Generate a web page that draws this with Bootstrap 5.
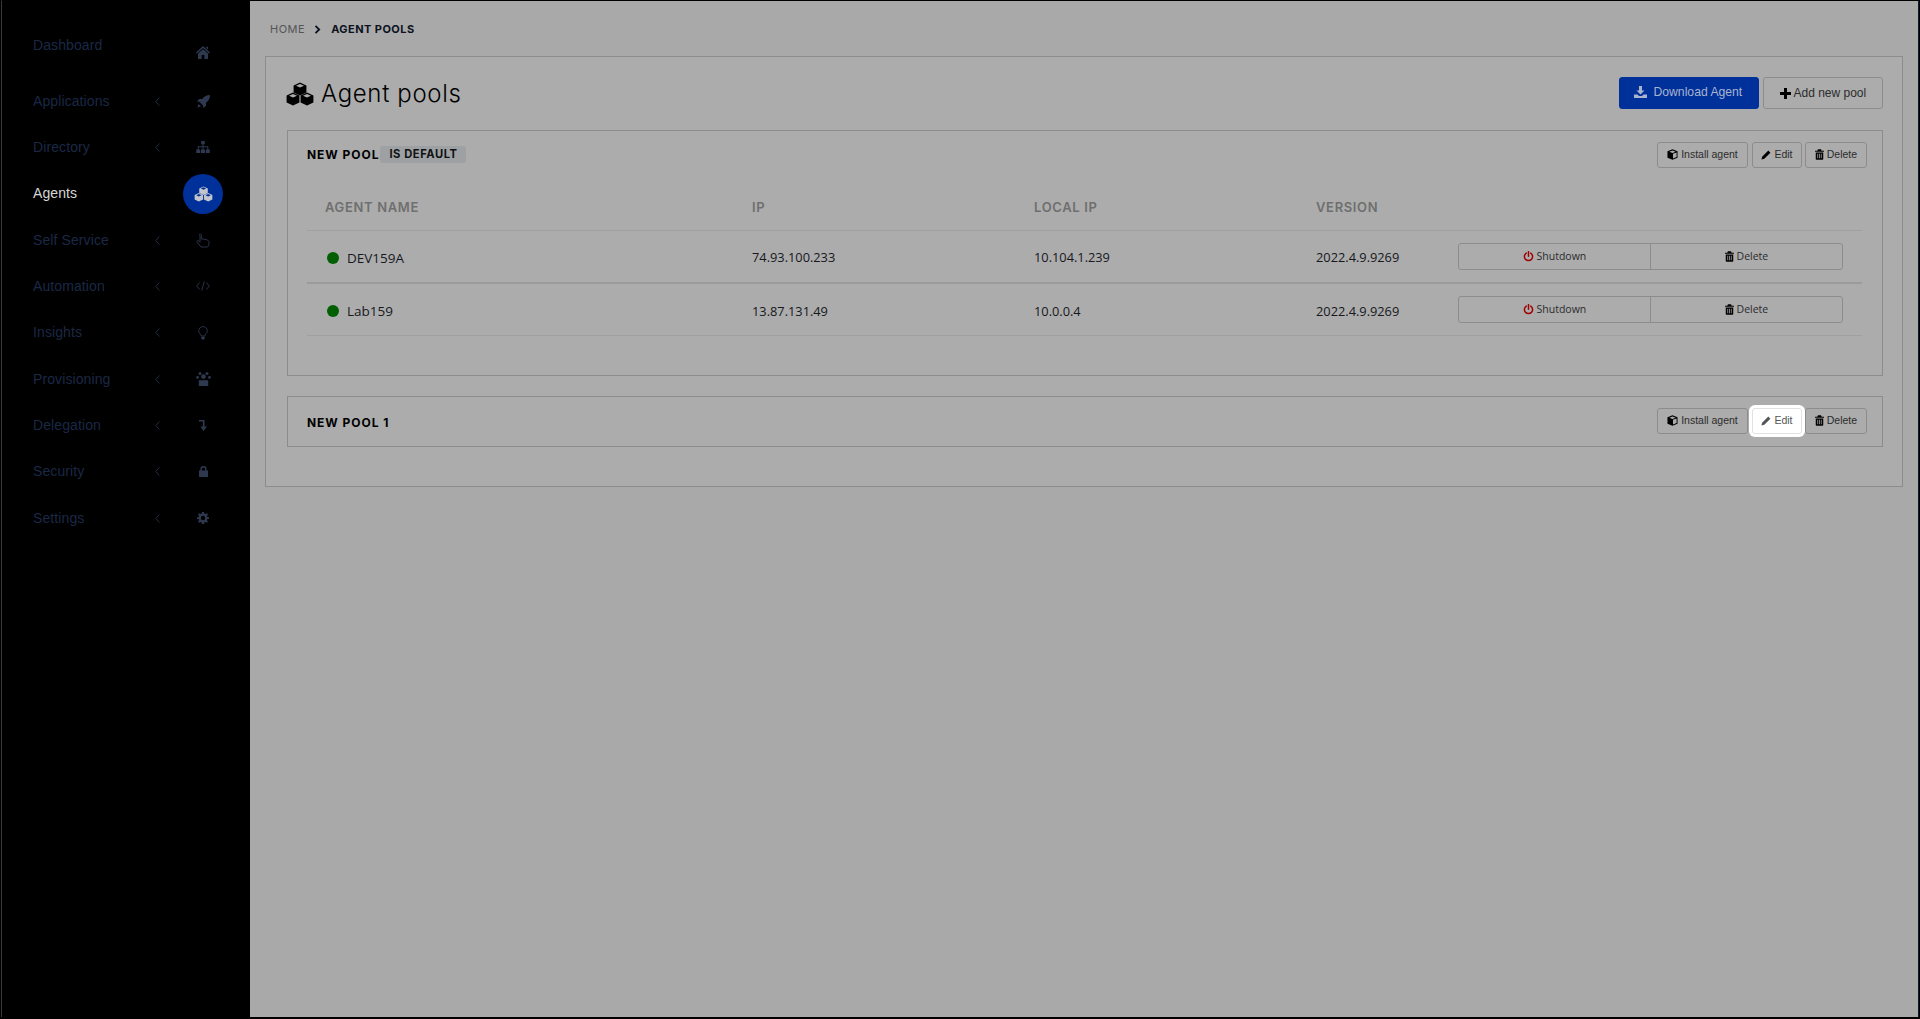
<!DOCTYPE html>
<html lang="en">
<head>
<meta charset="utf-8">
<title>Agent pools</title>
<link href="https://cdn.jsdelivr.net/npm/bootstrap@5.3.0/dist/css/bootstrap.min.css" rel="stylesheet">
<style>
html,body{height:100%;background:#000;overflow:hidden}
.frame{height:1017px;border:1px solid #3a3a3a;border-top-color:#000;border-right-color:#111a33;border-bottom:0;margin:0 1px 0 1px;background:#a9a9a9;font-family:"Liberation Sans",Arial,sans-serif}
.sidenav{width:248px;background:#000;padding-top:32px;flex:none}
.side-row{height:46.33px;padding-left:31px;color:#1b2845;font-size:14px;letter-spacing:.1px}
.side-row.first{height:45px;align-items:flex-start!important;padding-top:2px}
.side-row.active{color:#d6d6d6}
.side-label{width:121px}
.side-chev{width:29px;color:#27324a;padding-left:1px}
.side-chev svg{display:block}
.side-ico{width:40px;height:40px;color:#2e3950}
.first .side-ico{margin-top:-3px}
.first .side-chev{height:1px}
.active .side-ico{background:#00309a;color:#c2c6cc}
.main-col{padding:0 15px 0 15px;min-width:0}
.crumbs{height:55px;padding:2px 0 0 5px;font-family:Inter,sans-serif;font-size:11px;color:#555;letter-spacing:.5px}
.crumbs b{color:#0c1220;font-weight:700;letter-spacing:.45px}
.crumbs svg{margin:0 10px 0 9px}
.pane{background:#acacac;border:1px solid #8c8c8c;border-radius:0;padding:0 19px 39px 21px}
.pane-head{height:73px;padding-bottom:1px}
.pane-title{font-family:Inter,sans-serif;font-weight:300;font-size:24px;line-height:1;letter-spacing:.65px;color:#000;margin:1px 0 0 -1px}
.pane-title svg{margin-right:7px}
.btn-blue,.btn-blue:hover{background:#00309a;border:1px solid #00309a;color:#a9b4cf;font-size:12.2px;width:140px;height:32px;padding:0 2px 1px 0;border-radius:3px}
.btn-plain,.btn-plain:hover{background:transparent;border:1px solid #8c8c8c;color:#2b2b2b;font-size:12px;width:120px;height:32px;padding:0 0 1px;border-radius:3px;margin-left:4px}
.pool{background:transparent;border:1px solid #8c8c8c;border-radius:0;margin-bottom:20px}
.pool-head{padding:11px 15px 0 19px;height:51px}
.pool-last{height:49px;padding-top:11px}
.pool-name{font-family:Inter,sans-serif;font-weight:700;font-size:12px;letter-spacing:.95px;line-height:17px;color:#000;margin-top:4px}
.pool-last .pool-name{margin-top:6px}
.pill{background:#9ea1a4;color:#111;font-family:Inter,sans-serif;font-weight:700;font-size:11.2px;letter-spacing:.55px;padding:0 8px 0 9px;height:17px;line-height:17px;border-radius:3px;margin-left:1px;margin-top:4px}
.btn-tiny,.btn-tiny:hover{background:transparent;border:1px solid #8c8c8c;color:#2b2b2b;font-size:10.5px;height:26px;padding:0;border-radius:3px;white-space:nowrap}
.w-install{width:91px;margin-right:4px}
.w-edit{width:50px;margin-right:3px}
.w-del{width:62px}
.hilite,.hilite:hover{background:#fff;border-color:#e2e2e2;color:#555;box-shadow:0 0 0 3px #fff;position:relative}
.pool-table{table-layout:fixed;width:1555px;margin:0 0 39px 19px;--bs-table-bg:transparent;color:#16181d;font-family:"Open Sans",sans-serif;font-size:12.8px}
.pool-table th{font-family:Inter,sans-serif;font-weight:600;font-size:13px;letter-spacing:.65px;color:#6f6f6f;height:48px;vertical-align:middle;padding:4px 18px 0;border-bottom:1px solid #a0a0a0}
.pool-table td{height:52px;vertical-align:middle;padding:3px 18px 0;border-bottom:1px solid #a0a0a0;background:transparent;color:#16181d}
.pool-table td.acts{padding-top:1px}
.pool-table tr.thick td{border-bottom:2px solid #9b9b9b;height:53px}
.pool-table tbody tr:last-child td{padding-top:4px}
.pool-table tbody tr:last-child td.acts{padding-top:1px}
.c1{width:427px}.c2,.c3{width:282px}.c4{width:142px}.c5{width:422px}
.agent{gap:8px;font-size:13.5px;padding-left:2px}
.dot{width:12px;height:12px;border-radius:50%;background:#005f00;flex:none}
.pwr{color:#a00000}
.row-btn,.row-btn:hover{background:transparent;border:1px solid #8c8c8c;color:#2b2b2b;font-size:10.5px;height:27px;width:193px;padding:0;border-radius:0}
.row-btn:first-child{border-radius:3px 0 0 3px}
.row-btn:last-child{border-radius:0 3px 3px 0;margin-left:-1px}
svg.i{vertical-align:-2px;fill:currentColor}
</style>
</head>
<body>
<svg width="0" height="0" class="d-none" aria-hidden="true">
<symbol id="cube" viewBox="0 0 14 14"><path d="M7 .6 13.400 3.600V10.400L7 13.400.6 10.400V3.600Z" fill="currentColor"/><path d="M7 2 11 3.800 7 5.600 3 3.800Z" fill="var(--cube-top,#acacac)"/></symbol>
<symbol id="cubes" viewBox="0 0 28 24"><use href="#cube" x="7" y="0" width="14" height="14"/><use href="#cube" x="0" y="10" width="14" height="14"/><use href="#cube" x="14" y="10" width="14" height="14"/></symbol>
<symbol id="trash" viewBox="0 0 12 14"><path d="M4 0h4l1 2h3v1.400H0V2h3ZM1 4.400h10V13a1 1 0 0 1-1 1H2a1 1 0 0 1-1-1ZM3.200 6v6h1V6ZM5.500 6v6h1V6ZM7.800 6v6h1V6Z" fill-rule="evenodd"/></symbol>
<symbol id="pencil" viewBox="0 0 14 14"><path d="M10.200 .8 13.200 3.800 4.600 12.400 .6 13.400 1.600 9.400Z"/></symbol>
<symbol id="box" viewBox="0 0 14 14"><path d="M7 .4 13.400 3V11L7 13.600.6 11V3ZM7 2 3 3.600 7 5.200 11 3.600Z" fill-rule="evenodd"/><path d="M7.600 6.200 12.200 4.400V10.200L7.600 12Z" fill="#acacac"/></symbol>
<symbol id="power" viewBox="0 0 14 14"><path d="M4.200 2.600a5.200 5.200 0 1 0 5.600 0M7 .8v6" fill="none" stroke="currentColor" stroke-width="1.900" stroke-linecap="round"/></symbol>
<symbol id="chev" viewBox="0 0 5 9"><path d="M4.400 .5.800 4.500 4.400 8.500" fill="none" stroke="currentColor" stroke-width=".9"/></symbol>
</svg>
<div class="frame d-flex">
  <nav class="sidenav">
    <div class="side-row first d-flex align-items-center"><span class="side-label">Dashboard</span><span class="side-chev"></span><span class="side-ico d-flex align-items-center justify-content-center"><svg class="i" width="14" height="13" viewBox="0 0 14 13"><path d="M7 0 14 6.400 13 7.400 7 2 1 7.400 0 6.400ZM2 7.600 7 3.200 12 7.600V13H8.400V9H5.600V13H2ZM10.200 .8H12V3.600L10.200 2Z"/></svg></span></div>
    <div class="side-row d-flex align-items-center"><span class="side-label">Applications</span><span class="side-chev"><svg width="5" height="9"><use href="#chev"/></svg></span><span class="side-ico d-flex align-items-center justify-content-center"><svg class="i" width="13" height="13" viewBox="0 0 13 13"><path d="M13 0C9.500 0 7.300 1.400 5.200 4H2.200L0 6.600 2.600 7 6 10.400 6.400 13 9 10.800V7.800C11.600 5.700 13 3.500 13 0ZM1.600 9 4 11.400 .4 12.600Z"/></svg></span></div>
    <div class="side-row d-flex align-items-center"><span class="side-label">Directory</span><span class="side-chev"><svg width="5" height="9"><use href="#chev"/></svg></span><span class="side-ico d-flex align-items-center justify-content-center"><svg class="i" width="14" height="12" viewBox="0 0 14 12"><path d="M5.200 0H8.800V3.200H7.500V5.200H12.300V8.600H13.800V12H9.800V8.600H11.300V6.200H7.500V8.600H9V12H5V8.600H6.500V6.200H2.700V8.600H4.200V12H.2V8.600H1.700V5.200H6.500V3.200H5.200Z"/></svg></span></div>
    <div class="side-row active d-flex align-items-center"><span class="side-label">Agents</span><span class="side-chev"></span><span class="side-ico rounded-circle d-flex align-items-center justify-content-center"><svg width="19" height="16" style="--cube-top:#00309a"><use href="#cubes"/></svg></span></div>
    <div class="side-row d-flex align-items-center"><span class="side-label">Self Service</span><span class="side-chev"><svg width="5" height="9"><use href="#chev"/></svg></span><span class="side-ico d-flex align-items-center justify-content-center"><svg width="14" height="15" viewBox="0 0 14 15"><path d="M3.400 1.400c1-1 2 0 2 1V6c3 0 7 .6 7.600 2.600.2 2-.4 4-1.400 5.400H5L1 9c-.8-1.200.6-2 1.800-1L4 9V3c0-.6-.2-1.100-.6-1.600Z" fill="none" stroke="currentColor" stroke-width=".9"/></svg></span></div>
    <div class="side-row d-flex align-items-center"><span class="side-label">Automation</span><span class="side-chev"><svg width="5" height="9"><use href="#chev"/></svg></span><span class="side-ico d-flex align-items-center justify-content-center"><svg width="14" height="10" viewBox="0 0 14 10"><path d="M3.600 1.500 .7 5 3.600 8.500M10.400 1.500 13.300 5 10.400 8.500M8.300 .4 5.700 9.600" fill="none" stroke="currentColor" stroke-width=".9"/></svg></span></div>
    <div class="side-row d-flex align-items-center"><span class="side-label">Insights</span><span class="side-chev"><svg width="5" height="9"><use href="#chev"/></svg></span><span class="side-ico d-flex align-items-center justify-content-center"><svg width="10" height="14" viewBox="0 0 10 14"><path d="M5 .6a4.300 4.300 0 0 0-4.300 4.300C.7 7 2.800 8 3.200 10H6.800C7.200 8 9.300 7 9.300 4.900A4.300 4.300 0 0 0 5 .6Z" fill="none" stroke="currentColor" stroke-width=".9"/><path d="M3.200 10.800H6.800V12.500L5 14 3.200 12.500Z" fill="currentColor"/></svg></span></div>
    <div class="side-row d-flex align-items-center"><span class="side-label">Provisioning</span><span class="side-chev"><svg width="5" height="9"><use href="#chev"/></svg></span><span class="side-ico d-flex align-items-center justify-content-center"><svg class="i" width="15" height="14" viewBox="0 0 15 14"><circle cx="4" cy="1.600" r="1.500"/><circle cx="11" cy="1.600" r="1.500"/><circle cx="7.500" cy="4.600" r="2.300"/><circle cx="1.500" cy="5.400" r="1.400"/><circle cx="13.500" cy="5.400" r="1.400"/><path d="M2.800 8.200H12.200V14H2.800Z"/></svg></span></div>
    <div class="side-row d-flex align-items-center"><span class="side-label">Delegation</span><span class="side-chev"><svg width="5" height="9"><use href="#chev"/></svg></span><span class="side-ico d-flex align-items-center justify-content-center"><svg class="i" width="8" height="11" viewBox="0 0 8 11"><path d="M0 0H5.500V6.500H8L4.500 11 1.500 6.500H3.800V1.600H0Z"/></svg></span></div>
    <div class="side-row d-flex align-items-center"><span class="side-label">Security</span><span class="side-chev"><svg width="5" height="9"><use href="#chev"/></svg></span><span class="side-ico d-flex align-items-center justify-content-center"><svg class="i" width="9" height="11" viewBox="0 0 9 11"><path d="M1.400 4.600V3.200a3.100 3.100 0 0 1 6.200 0V4.600H9V11H0V4.600ZM2.800 4.600H6.200V3.200a1.700 1.700 0 0 0-3.400 0Z" fill-rule="evenodd"/></svg></span></div>
    <div class="side-row d-flex align-items-center"><span class="side-label">Settings</span><span class="side-chev"><svg width="5" height="9"><use href="#chev"/></svg></span><span class="side-ico d-flex align-items-center justify-content-center"><svg class="i" width="12" height="12" viewBox="0 0 12 12"><path d="M5 0H7L7.300 1.600 8.600 2.100 10 1.200 11 2.700 9.900 3.900 10.300 5.100 12 5.300V6.900L10.300 7.100 9.900 8.300 11 9.500 9.800 10.800 8.500 9.900 7.300 10.400 7 12H5L4.700 10.400 3.500 9.900 2.200 10.800 1 9.500 2.100 8.300 1.700 7.100 0 6.900V5.300L1.700 5.100 2.100 3.900 1 2.700 2 1.200 3.400 2.100 4.700 1.600ZM6 3.800A2.200 2.200 0 1 0 6 8.200 2.200 2.200 0 0 0 6 3.800Z" fill-rule="evenodd"/></svg></span></div>
  </nav>
  <main class="main-col flex-grow-1">
    <div class="crumbs d-flex align-items-center"><span>HOME</span><svg width="7" height="9" viewBox="0 0 7 9"><path d="M1.500 .8 5.200 4.500 1.500 8.200" fill="none" stroke="#0c1220" stroke-width="1.800"/></svg><b>AGENT POOLS</b></div>
    <section class="pane">
      <div class="pane-head d-flex align-items-center justify-content-between">
        <h1 class="pane-title d-flex align-items-center"><svg width="28" height="24" class="text-black" style="--cube-top:#acacac"><use href="#cubes"/></svg>Agent pools</h1>
        <div class="d-flex">
          <button type="button" class="btn btn-blue"><svg class="i" width="13" height="12" viewBox="0 0 13 12"><path d="M5 0H8V4.500H10.500L6.500 8.500 2.500 4.500H5ZM0 8.500H3.500L5 10H8L9.500 8.500H13V12H0Z"/></svg>&nbsp; Download Agent</button>
          <button type="button" class="btn btn-plain"><svg class="i text-black" width="11" height="11" viewBox="0 0 11 11"><path d="M4 0H7V4H11V7H7V11H4V7H0V4H4Z"/></svg> Add new pool</button>
        </div>
      </div>
      <div class="pool">
        <div class="pool-head d-flex justify-content-between">
          <div class="d-flex align-items-start"><span class="pool-name">NEW POOL</span><span class="pill">IS DEFAULT</span></div>
          <div class="d-flex">
            <button type="button" class="btn btn-tiny w-install"><svg class="i text-black" width="11" height="11"><use href="#box"/></svg> Install agent</button>
            <button type="button" class="btn btn-tiny w-edit"><svg class="i text-black" width="10" height="10"><use href="#pencil"/></svg> Edit</button>
            <button type="button" class="btn btn-tiny w-del"><svg class="i text-black" width="9" height="11"><use href="#trash"/></svg> Delete</button>
          </div>
        </div>
        <table class="table pool-table">
          <colgroup><col class="c1"><col class="c2"><col class="c3"><col class="c4"><col class="c5"></colgroup>
          <thead><tr><th>AGENT NAME</th><th>IP</th><th>LOCAL IP</th><th>VERSION</th><th></th></tr></thead>
          <tbody>
            <tr class="thick"><td><div class="agent d-flex align-items-center"><span class="dot"></span>DEV159A</div></td><td>74.93.100.233</td><td>10.104.1.239</td><td>2022.4.9.9269</td><td class="acts"><div class="d-flex"><button type="button" class="btn row-btn"><svg class="i pwr" width="11" height="11"><use href="#power"/></svg> Shutdown</button><button type="button" class="btn row-btn"><svg class="i text-black" width="9" height="11"><use href="#trash"/></svg> Delete</button></div></td></tr>
            <tr><td><div class="agent d-flex align-items-center"><span class="dot"></span>Lab159</div></td><td>13.87.131.49</td><td>10.0.0.4</td><td>2022.4.9.9269</td><td class="acts"><div class="d-flex"><button type="button" class="btn row-btn"><svg class="i pwr" width="11" height="11"><use href="#power"/></svg> Shutdown</button><button type="button" class="btn row-btn"><svg class="i text-black" width="9" height="11"><use href="#trash"/></svg> Delete</button></div></td></tr>
          </tbody>
        </table>
      </div>
      <div class="pool mb-0">
        <div class="pool-head pool-last d-flex justify-content-between">
          <div class="d-flex align-items-start"><span class="pool-name">NEW POOL 1</span></div>
          <div class="d-flex">
            <button type="button" class="btn btn-tiny w-install"><svg class="i text-black" width="11" height="11"><use href="#box"/></svg> Install agent</button>
            <button type="button" class="btn btn-tiny w-edit hilite"><svg class="i" width="10" height="10"><use href="#pencil"/></svg> Edit</button>
            <button type="button" class="btn btn-tiny w-del"><svg class="i text-black" width="9" height="11"><use href="#trash"/></svg> Delete</button>
          </div>
        </div>
      </div>
    </section>
  </main>
</div>
</body>
</html>
